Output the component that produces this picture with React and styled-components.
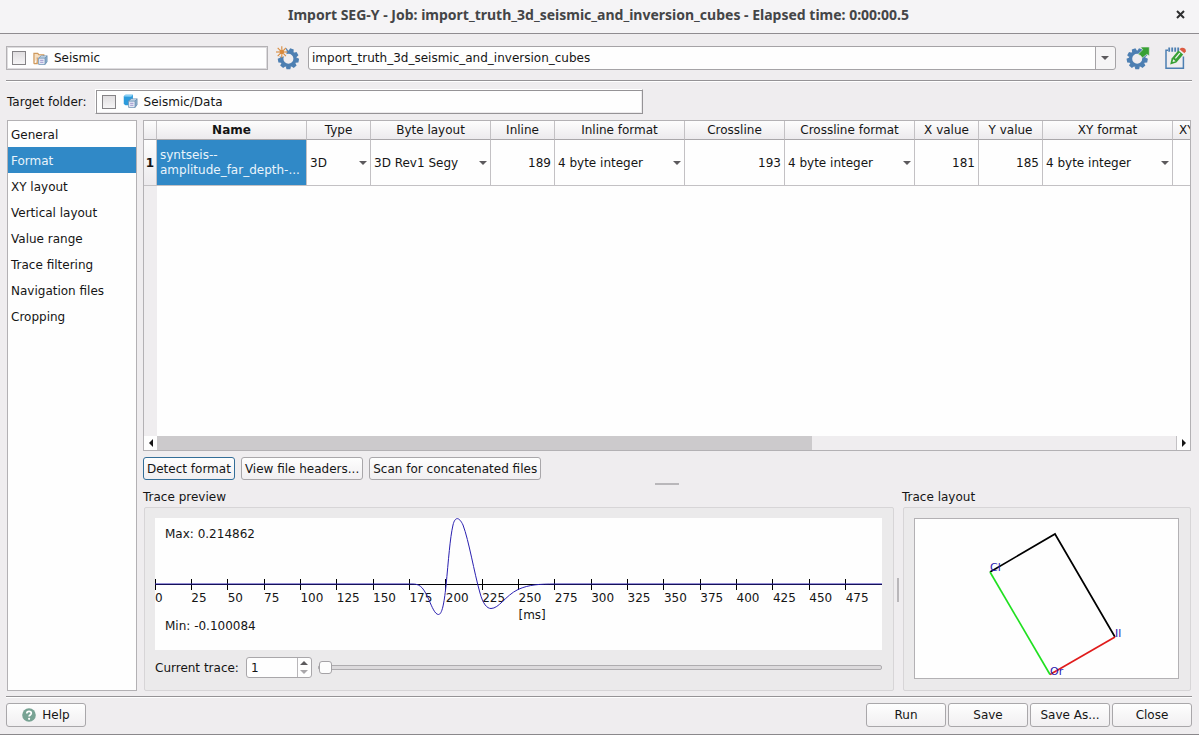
import React, { useState } from "react";
import styled, { createGlobalStyle, css } from "styled-components";

const GlobalStyle = createGlobalStyle`
  *, *::before, *::after { box-sizing: border-box; }
  body {
    margin: 0;
    background: #efedef;
    color: #151515;
    font: 12px/16px "DejaVu Sans", sans-serif;
  }
  button, input, select { font: inherit; color: inherit; margin: 0; }
`;

const Dialog = styled.div`
  display: flex;
  flex-direction: column;
  min-height: 100vh;
  border-bottom: 1px solid #8a888b;
`;

const TitleBar = styled.header`
  display: flex;
  align-items: center;
  height: 34px;
  padding: 0 14px 4px 21px;
  background: #f5f4f6;
  border-bottom: 1px solid #8f8c90;
`;

const Title = styled.h1`
  flex: 1;
  margin: 0;
  text-align: center;
  font: 700 14px/20px "Noto Sans", sans-serif;
  color: #444547;
`;

const IconButton = styled.button`
  display: flex;
  padding: 0;
  border: 0;
  background: none;
`;

const Toolbar = styled.div`
  display: flex;
  align-items: center;
  padding: 12px 11px 10px 6px;
`;

const ToolbarIcons = styled.div`
  display: flex;
  gap: 14px;
  margin-left: 10px;
`;

const Separator = styled.hr`
  height: 2px;
  margin: 0 7px 0 6px;
  border: 0;
  border-top: 1px solid #959396;
  background: #ffffff;
`;

const FolderBox = styled.label`
  display: flex;
  align-items: center;
  padding: 0 4px;
  background: #fefefe;
  ${(p) =>
    p.$sunken
      ? css`
          width: 548px;
          height: 25px;
          border: 1px solid;
          border-color: #ffffff #959396 #959396 #ffffff;
          box-shadow: inset 1px 1px #959396, inset -1px -1px #eceaec;
          padding-left: 6px;
        `
      : css`
          width: 262px;
          height: 24px;
          border: 1px solid #b3b1b4;
          box-shadow: inset 0 0 0 1px #dddbde;
          padding-left: 5px;
          margin-right: 8px;
        `}
`;

const CheckBox = styled.input.attrs({ type: "checkbox" })`
  appearance: none;
  width: 14px;
  height: 14px;
  margin-right: 7px;
  border: 1px solid #858386;
  background: linear-gradient(#e0dee0, #f6f5f6);
`;

const FolderName = styled.span`
  margin-left: 6px;
`;

const Combo = styled.div`
  position: relative;
  flex: 1;
  margin-left: 8px;
  height: 24px;
  border: 1px solid #a5a3a6;
  border-radius: 3px;
  background: linear-gradient(to left, #f6f5f6 19px, #a5a3a6 19px, #a5a3a6 20px, #fefefe 20px);
`;

const Caret = styled.span`
  position: absolute;
  top: 50%;
  right: ${(p) => p.$right}px;
  margin-top: -2px;
  border: 4px solid transparent;
  border-top-color: #5c5a5d;
  border-bottom: 0;
  pointer-events: none;
`;

const Select = styled.select`
  appearance: none;
  display: block;
  width: 100%;
  height: 100%;
  padding: 0 20px 0 3px;
  border: 0;
  background: none;
`;

const TargetRow = styled.div`
  display: flex;
  align-items: center;
  gap: 8px;
  padding: 7px 8px 6px 7px;
`;

const Body = styled.div`
  flex: 1;
  display: flex;
  gap: 6px;
  padding: 0 8px 5px 7px;
`;

const Pages = styled.nav`
  width: 130px;
  border: 1px solid #b3b1b4;
  background: #fefefe;
`;

const PageLink = styled.a`
  display: block;
  padding: 6px 3px 4px;
  color: ${(p) => (p.$active ? "#eaf4fb" : "inherit")};
  background: ${(p) => (p.$active ? "#3089c7" : "none")};
  text-decoration: none;
`;

const Content = styled.main`
  flex: 1;
  min-width: 0;
  display: flex;
  flex-direction: column;
`;

const TableView = styled.section`
  flex: 1;
  display: flex;
  flex-direction: column;
  border: 1px solid #b3b1b4;
  background: linear-gradient(to right, #efedef 13px, #fefefe 13px);
  overflow: hidden;
`;

const TableClip = styled.div`
  flex: 1;
  overflow: hidden;
`;

const Table = styled.table`
  width: 1093px;
  table-layout: fixed;
  border-collapse: separate;
  border-spacing: 0;
`;

const HeadCell = styled.th`
  height: 19px;
  padding: 0 0 0 ${(p) => (p.$clipped ? 6 : 0)}px;
  border-right: 1px solid #c3c1c4;
  border-bottom: 1px solid #a9a7aa;
  background: linear-gradient(#fdfdfd, #eceaed);
  font-weight: ${(p) => (p.$bold ? 700 : 400)};
  line-height: 18px;
  text-align: ${(p) => (p.$clipped ? "left" : "center")};
`;

const RowHead = styled.th`
  height: 46px;
  padding: 0;
  border-right: 1px solid #c3c1c4;
  border-bottom: 1px solid #c3c1c4;
  background: linear-gradient(#fdfdfd, #eceaed);
`;

const Cell = styled.td`
  height: 46px;
  padding: ${(p) => (p.$selected ? "0 0 0 3px" : p.$number ? "2px 3px 0 0" : "1px 0 0")};
  border-right: 1px solid #c3c1c4;
  border-bottom: 1px solid #c3c1c4;
  background: ${(p) => (p.$selected ? "#3089c7" : "#fefefe")};
  color: ${(p) => (p.$selected ? "#eaf4fb" : "inherit")};
  line-height: 15px;
  text-align: ${(p) => (p.$number ? "right" : "left")};
`;

const CellCombo = styled.div`
  position: relative;
  height: 24px;
`;

const ScrollBar = styled.div`
  display: flex;
  height: 14px;
  background: #efedef;
`;

const ScrollButton = styled.button`
  display: flex;
  align-items: center;
  justify-content: center;
  width: 13px;
  padding: 0;
  border: 0;
  background: #fefefe;
`;

const ScrollTrack = styled.div`
  flex: 1;
  display: flex;
  border-right: 1px solid #c3c1c4;
`;

const ScrollThumb = styled.div`
  width: calc(100% * 9 / 14);
  background: #cccacc;
`;

const ButtonRow = styled.div`
  display: flex;
  gap: 6px;
  padding-top: 6px;
`;

const Button = styled.button`
  display: flex;
  align-items: center;
  justify-content: center;
  gap: 6px;
  height: ${(p) => (p.$wide ? 24 : 23)}px;
  min-width: ${(p) => (p.$wide ? 80 : 0)}px;
  padding: 0 3px;
  border: 1px solid ${(p) => (p.$focused ? "#336e98" : "#a9a7aa")};
  border-radius: 3px;
  background: linear-gradient(#fefefe, #f1eff1);
  white-space: nowrap;
`;

const Grip = styled.div`
  flex: none;
  background: #b9b7ba;
  ${(p) =>
    p.$vertical
      ? css`
          align-self: center;
          width: 2px;
          height: 24px;
          margin: 0 3px;
        `
      : css`
          align-self: center;
          width: 24px;
          height: 2px;
          margin: 3px 0 4px;
        `}
`;

const Previews = styled.div`
  display: flex;
`;

const Preview = styled.section`
  display: flex;
  flex-direction: column;
  ${(p) => (p.$grow ? "flex: 1; min-width: 0;" : "width: 289px;")}
`;

const PreviewTitle = styled.h2`
  margin: 0 0 2px;
  font: inherit;
`;

const Group = styled.div`
  flex: 1;
  margin-left: 1px;
  padding: 10px 11px 11px 10px;
  border: 1px solid #d7d5d7;
  border-radius: 2px;
  background: #ebeaeb;
`;

const TracePlot = styled.svg`
  display: block;
  width: 100%;
  height: 132px;
  background: #fefefe;
  fill: #151515;
`;

const LayoutPlot = styled.svg`
  display: block;
  width: 100%;
  height: 161px;
  border: 1px solid #b3b1b4;
  background: #fefefe;
`;

const TraceControls = styled.div`
  display: flex;
  align-items: center;
  padding-top: 7px;
`;

const SpinBox = styled.div`
  display: flex;
  width: 66px;
  height: 21px;
  margin: 0 6px 0 7px;
  border: 1px solid #a9a7aa;
  border-radius: 3px;
  background: #fefefe;
`;

const SpinInput = styled.input`
  flex: 1;
  min-width: 0;
  padding: 0 4px;
  border: 0;
  background: none;
  appearance: textfield;
  &::-webkit-inner-spin-button { appearance: none; }
`;

const SpinButtons = styled.div`
  display: flex;
  flex-direction: column;
  width: 14px;
  border-left: 1px solid #b9b7ba;
`;

const SpinButton = styled.button`
  flex: 1;
  display: flex;
  align-items: center;
  justify-content: center;
  padding: 0;
  border: 0;
  background: none;
`;

const Slider = styled.input.attrs({ type: "range" })`
  flex: 1;
  min-width: 0;
  height: 14px;
  appearance: none;
  background: none;
  &::-webkit-slider-runnable-track {
    height: 5px;
    border: 1px solid #aeacaf;
    border-radius: 2px;
    background: #dcdadc;
  }
  &::-webkit-slider-thumb {
    appearance: none;
    width: 13px;
    height: 13px;
    margin-top: -5px;
    border: 1px solid #a5a3a6;
    border-radius: 3px;
    background: #fdfdfd;
  }
`;

const Footer = styled.footer`
  display: flex;
  gap: 2px;
  padding: 5px 7px 7px 6px;
`;

const Spacer = styled.div`
  flex: 1;
`;

const TEETH = [20, 60, 100, 140, 180, 220, 260, 300, 340];

function Gear({ cx, cy }) {
  return (
    <g transform={`translate(${cx} ${cy})`} fill="#4d7fb2">
      <circle r="6.7" fill="none" stroke="#4d7fb2" strokeWidth="3.4" />
      {TEETH.map((a) => (
        <path key={a} d="M-2.6 -7.6 L-1.9 -10.5 H1.9 L2.6 -7.6 Z" transform={`rotate(${a})`} />
      ))}
    </g>
  );
}

function NewJobIcon() {
  return (
    <svg width="24" height="24" viewBox="0 0 24 24" aria-hidden="true">
      <Gear cx={12.4} cy={12.8} />
      <circle cx="5.8" cy="6" r="5" fill="#efedef" />
      <g transform="translate(5.8 6)" stroke="#d98a3c" strokeWidth="1.1">
        {[0, 45, 90, 135, 180, 225, 270, 315].map((a) => (
          <path key={a} d="M0 -2.4 V-5.8" transform={`rotate(${a})`} />
        ))}
        <circle r="1.9" fill="#d98a3c" />
      </g>
    </svg>
  );
}

function ExportJobIcon() {
  return (
    <svg width="24" height="24" viewBox="0 0 24 24" aria-hidden="true">
      <Gear cx={11.2} cy={12.8} />
      <path
        d="M14.6 1 H23.3 V9.8 L20.8 8.4 L16.2 12 C15.2 9.6 14 8.800 12 8.400 L16.600 3.800 Z"
        fill="#38a035" stroke="#efedef" strokeWidth="0.6"
      />
    </svg>
  );
}

function NotesIcon() {
  return (
    <svg width="24" height="24" viewBox="0 0 24 24" aria-hidden="true">
      <path d="M4 4.2 H2 V22.200 H19.400 V10.500" fill="none" stroke="#4d7fb2" strokeWidth="1.500" />
      <path d="M5.200 1.500 V5.800 M8.200 1.500 V5.800 M11.200 1.500 V5.800 M14.200 1.500 V5.800" stroke="#4d7fb2" strokeWidth="1.800" />
      <path d="M6.200 18.400 L7.600 12.400 L14.300 4.600 L19.200 8.600 L12.400 16.400 Z" fill="#38a035" />
      <path d="M8.600 15.900 L9.200 13.300 L11.600 15.200 Z" fill="#f3f7f2" />
      <path d="M11.400 12.300 L15.800 7.200" stroke="#f3f7f2" strokeWidth="1.300" />
      <path d="M15.600 3.200 C17 0.600 22.600 1.400 21.800 5.200 L20.400 7.200 Z" fill="#dc5a41" />
    </svg>
  );
}

function CubeOverlay() {
  return (
    <g stroke="#6f93b5" strokeWidth="0.9" strokeLinejoin="round">
      <path d="M6 7.6 L8.6 5.2 H15 L12.8 7.6 Z" fill="#dcebf7" />
      <path d="M12.8 7.6 L15 5.2 V11.6 L12.8 14.3 Z" fill="#8eb3d1" />
      <path d="M6 7.6 H12.8 V14.3 H6 Z" fill="#eef1fa" />
      <path d="M7.6 9.9 H11.2 M7.6 12 H11.2" stroke="#8a7fc0" />
    </g>
  );
}

function SeismicIcon() {
  return (
    <svg width="15" height="15" viewBox="0 0 16 16" aria-hidden="true">
      <path d="M1 13.5 V2.5 H5 L6.2 4 H11.5 V6 M1 13.5 H4.5 V7" fill="#f6dfc2" stroke="#cf9a5e" strokeWidth="1.3" />
      <CubeOverlay />
    </svg>
  );
}

function DataIcon() {
  return (
    <svg width="15" height="15" viewBox="0 0 16 16" aria-hidden="true">
      <path d="M0.8 2.4 L2.6 0.8 H10.6 V9 L8.8 12 H2.6 L0.8 10.6 Z" fill="#2c9bdc" />
      <path d="M0.8 2.6 L2.6 0.8 H10.6 L8.8 2.8 Z" fill="#8ad0f5" />
      <CubeOverlay />
    </svg>
  );
}

function HelpIcon() {
  return (
    <svg width="14" height="14" viewBox="0 0 14 14" aria-hidden="true">
      <circle cx="7" cy="7" r="6.8" fill="#78a394" />
      <path d="M4.8 5.4 C4.8 2.6 9.3 2.7 9.3 5.3 C9.3 7 7.1 6.9 7.1 8.6" fill="none" stroke="#fff" strokeWidth="1.7" />
      <circle cx="7.1" cy="10.8" r="1.1" fill="#fff" />
    </svg>
  );
}

function Arrow({ points, width, height, color = "#151515" }) {
  return (
    <svg width={width} height={height} viewBox={`0 0 ${width} ${height}`} aria-hidden="true">
      <polygon points={points} fill={color} />
    </svg>
  );
}

const PAGES = [
  "General", "Format", "XY layout", "Vertical layout",
  "Value range", "Trace filtering", "Navigation files", "Cropping",
];

const COLUMNS = [
  { title: "Name", width: 150 },
  { title: "Type", width: 64, value: "3D", choice: true },
  { title: "Byte layout", width: 120, value: "3D Rev1 Segy", choice: true },
  { title: "Inline", width: 64, value: "189" },
  { title: "Inline format", width: 130, value: "4 byte integer", choice: true },
  { title: "Crossline", width: 100, value: "193" },
  { title: "Crossline format", width: 130, value: "4 byte integer", choice: true },
  { title: "X value", width: 64, value: "181" },
  { title: "Y value", width: 64, value: "185" },
  { title: "XY format", width: 130, value: "4 byte integer", choice: true },
  { title: "XY", width: 64, value: "" },
];

function FormatTable() {
  return (
    <TableView>
      <TableClip>
        <Table>
          <colgroup>
            <col style={{ width: 13 }} />
            {COLUMNS.map((c) => <col key={c.title} style={{ width: c.width }} />)}
          </colgroup>
          <thead>
            <tr>
              <HeadCell aria-label="Row" />
              {COLUMNS.map((c) => (
                <HeadCell key={c.title} scope="col" $bold={c.title === "Name"} $clipped={c.title === "XY"}>
                  {c.title}
                </HeadCell>
              ))}
            </tr>
          </thead>
          <tbody>
            <tr>
              <RowHead scope="row">1</RowHead>
              <Cell $selected>syntseis--<br />amplitude_far_depth-...</Cell>
              {COLUMNS.slice(1).map((c) =>
                c.choice ? (
                  <Cell key={c.title}>
                    <CellCombo>
                      <Select aria-label={c.title}><option>{c.value}</option></Select>
                      <Caret $right={3} />
                    </CellCombo>
                  </Cell>
                ) : (
                  <Cell key={c.title} $number>{c.value}</Cell>
                )
              )}
            </tr>
          </tbody>
        </Table>
      </TableClip>
      <ScrollBar>
        <ScrollButton aria-label="Scroll left"><Arrow width={4} height={8} points="4,0 4,8 0,4" /></ScrollButton>
        <ScrollTrack><ScrollThumb /></ScrollTrack>
        <ScrollButton aria-label="Scroll right"><Arrow width={4} height={8} points="0,0 0,8 4,4" /></ScrollButton>
      </ScrollBar>
    </TableView>
  );
}

const TICKS = Array.from({ length: 20 }, (_, i) => i * 25);

function TracePreview() {
  return (
    <TracePlot role="img" aria-label="Trace preview">
      <line x1="0" x2="100%" y1="66.5" y2="66.5" stroke="#000" />
      {TICKS.map((t) => (
        <g key={t}>
          <line x1={`${t / 5}%`} x2={`${t / 5}%`} y1="61" y2="72" stroke="#000" shapeRendering="crispEdges" strokeWidth={t ? 1 : 2} />
          <text x={`${t / 5}%`} y="84">{t}</text>
        </g>
      ))}
      <svg width="100%" height="132" viewBox="0 0 727 132" preserveAspectRatio="none">
        <path
          d="M0 66 H258 C266 66 269 71 274 82 C277 89 280 96.500 283.500 96.500 C287 96.500 289 86 291 68 C293.500 42 295 20 298 7 C300 -1.500 304 -1.500 308 7 C314 23 319 54 325 75 C328 86 332 90.500 336 90.500 C344 90.500 350 78 363 71.500 C374 66.500 385 66 400 66 H727"
          fill="none" stroke="#2a20b0" vectorEffect="non-scaling-stroke"
        />
      </svg>
      <text x="10" y="20">Max: 0.214862</text>
      <text x="10" y="112">Min: -0.100084</text>
      <text x="50%" y="101">[ms]</text>
    </TracePlot>
  );
}

function TraceLayout() {
  return (
    <LayoutPlot viewBox="0 0 263 159" role="img" aria-label="Trace layout" fill="none" strokeWidth="1.7">
      <path d="M75 53 L140 15 L200 118" stroke="#000" />
      <path d="M200 118 L135 155.500" stroke="#e01b1b" />
      <path d="M75 53 L135 155.500" stroke="#20e020" />
      <g fill="#2a20b0" stroke="none" fontSize="11">
        <text x="75" y="52">Cl</text>
        <text x="200" y="118">Il</text>
        <text x="135" y="156">Or</text>
      </g>
    </LayoutPlot>
  );
}

export default function App() {
  const [trace, setTrace] = useState(1);
  return (
    <Dialog>
      <GlobalStyle />
      <TitleBar>
        <Title>Import SEG-Y - Job: import_truth_3d_seismic_and_inversion_cubes - Elapsed time: 0:00:00.5</Title>
        <IconButton aria-label="Close window">
          <svg width="9" height="9" viewBox="0 0 9 9"><path d="M1 1 L8 8 M8 1 L1 8" stroke="#2d2e30" strokeWidth="2" /></svg>
        </IconButton>
      </TitleBar>
      <Toolbar>
        <FolderBox>
          <CheckBox /><SeismicIcon /><FolderName>Seismic</FolderName>
        </FolderBox>
        <IconButton aria-label="New job"><NewJobIcon /></IconButton>
        <Combo>
          <Select aria-label="Job"><option>import_truth_3d_seismic_and_inversion_cubes</option></Select>
          <Caret $right={6} />
        </Combo>
        <ToolbarIcons>
          <IconButton aria-label="Export job"><ExportJobIcon /></IconButton>
          <IconButton aria-label="Edit job description"><NotesIcon /></IconButton>
        </ToolbarIcons>
      </Toolbar>
      <Separator />
      <TargetRow>
        <label htmlFor="target">Target folder:</label>
        <FolderBox $sunken>
          <CheckBox id="target" /><DataIcon /><FolderName>Seismic/Data</FolderName>
        </FolderBox>
      </TargetRow>
      <Body>
        <Pages>
          {PAGES.map((p) => (
            <PageLink key={p} href="#" $active={p === "Format"}>{p}</PageLink>
          ))}
        </Pages>
        <Content>
          <FormatTable />
          <ButtonRow>
            <Button $focused>Detect format</Button>
            <Button>View file headers...</Button>
            <Button>Scan for concatenated files</Button>
          </ButtonRow>
          <Grip />
          <Previews>
            <Preview $grow>
              <PreviewTitle>Trace preview</PreviewTitle>
              <Group>
                <TracePreview />
                <TraceControls>
                  <label htmlFor="trace">Current trace:</label>
                  <SpinBox>
                    <SpinInput id="trace" type="number" min="1" value={trace} onChange={(e) => setTrace(Number(e.target.value))} />
                    <SpinButtons>
                      <SpinButton aria-label="Next trace" onClick={() => setTrace(trace + 1)}>
                        <Arrow width={8} height={4} points="0,4 8,4 4,0" color="#5c5a5d" />
                      </SpinButton>
                      <SpinButton aria-label="Previous trace" onClick={() => setTrace(Math.max(1, trace - 1))}>
                        <Arrow width={8} height={4} points="0,0 8,0 4,4" color="#a9a7aa" />
                      </SpinButton>
                    </SpinButtons>
                  </SpinBox>
                  <Slider aria-label="Trace" min="1" max="500" value={trace} onChange={(e) => setTrace(Number(e.target.value))} />
                </TraceControls>
              </Group>
            </Preview>
            <Grip $vertical />
            <Preview>
              <PreviewTitle>Trace layout</PreviewTitle>
              <Group><TraceLayout /></Group>
            </Preview>
          </Previews>
        </Content>
      </Body>
      <Separator />
      <Footer>
        <Button $wide><HelpIcon />Help</Button>
        <Spacer />
        <Button $wide>Run</Button>
        <Button $wide>Save</Button>
        <Button $wide>Save As...</Button>
        <Button $wide>Close</Button>
      </Footer>
    </Dialog>
  );
}
